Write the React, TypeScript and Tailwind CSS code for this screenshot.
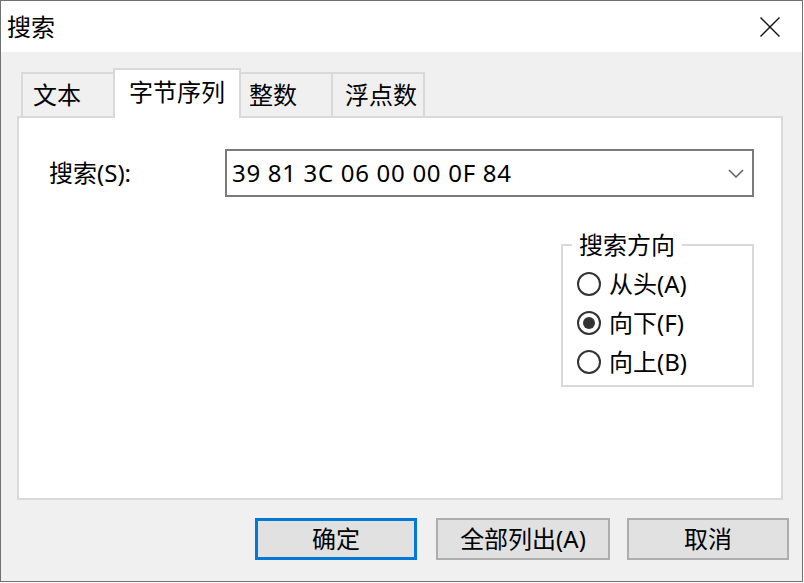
import React, { useState } from "react";

const options = ["从头(A)", "向下(F)", "向上(B)"];

const App = () => {
  const [dir, setDir] = useState(1);

  return (
    <div className="h-[583px] w-[804px] bg-white font-['Noto_Sans','Noto_Sans_CJK_SC',sans-serif] text-[24px] text-black">
      <div className="flex h-[582px] w-[803px] flex-col border border-[#707070] bg-[#f0f0f0]">
        {/* 标题栏 */}
        <div className="flex h-[51px] shrink-0 items-center justify-between bg-white pl-[6px] pr-[22px]">
          <span className="leading-none">搜索</span>
          <svg width="20" height="20" viewBox="0 0 20 20">
            <path d="M0.5 0.5 L19.5 19.5 M19.5 0.5 L0.5 19.5" stroke="#111" strokeWidth="1.4" fill="none" />
          </svg>
        </div>

        {/* 选项卡 */}
        <div className="ml-[20px] mt-[16px] flex h-[48px] items-end">
          <div className="flex h-[44px] w-[94px] items-center border-2 border-b-0 border-[#d9d9d9] pl-[10px] leading-none">
            文本
          </div>
          <div className="relative z-10 -mb-[2px] -ml-[2px] flex h-[50px] w-[128px] items-center border-2 border-b-0 border-[#d9d9d9] bg-white pb-[4px] pl-[14px] leading-none">
            字节序列
          </div>
          <div className="-ml-[2px] flex h-[44px] w-[94px] items-center border-2 border-b-0 border-[#d9d9d9] pl-[8px] leading-none">
            整数
          </div>
          <div className="-ml-[2px] flex h-[44px] w-[94px] items-center border-2 border-b-0 border-[#d9d9d9] pl-[12px] leading-none">
            浮点数
          </div>
        </div>

        {/* 面板 */}
        <div className="ml-[16px] h-[384px] w-[766px] border-2 border-[#d9d9d9] bg-white">
          <div className="mt-[31px] flex items-center">
            <div className="w-[206px] pl-[30px] leading-none">搜索(S):</div>
            <div className="flex h-[48px] w-[529px] items-center justify-between border-2 border-[#7a7a7a] bg-white pl-[5px] pr-[8px]">
              <span className="leading-none tracking-[0.7px]">39 81 3C 06 00 00 0F 84</span>
              <svg width="16" height="9" viewBox="0 0 16 9">
                <path d="M1 1 L8 8 L15 1" stroke="#606060" strokeWidth="1.5" fill="none" />
              </svg>
            </div>
          </div>

          {/* 搜索方向 */}
          <div className="relative ml-[542px] mt-[47px] h-[143px] w-[193px] border-2 border-[#d9d9d9] pl-[14px] pt-[18px]">
            <span className="absolute -top-[13px] left-[9px] bg-white px-[7px] leading-[24px]">搜索方向</span>
            {options.map((label, i) => (
              <button
                key={label}
                onClick={() => setDir(i)}
                className="flex h-[39px] items-center gap-[8px] leading-none"
              >
                <span className="flex h-[24px] w-[24px] items-center justify-center rounded-full border-2 border-[#333333] bg-white">
                  {dir === i && <span className="h-[12px] w-[12px] rounded-full bg-[#333333]" />}
                </span>
                {label}
              </button>
            ))}
          </div>
        </div>

        {/* 按钮 */}
        <div className="ml-[254px] mt-[18px] flex h-[42px] gap-[19px]">
          <button className="h-full w-[162px] border-[3px] border-[#0078d7] bg-[#e1e1e1] leading-none">确定</button>
          <button className="h-full w-[174px] border-2 border-[#adadad] bg-[#e1e1e1] leading-none">全部列出(A)</button>
          <button className="-ml-[2px] h-full w-[162px] border-2 border-[#adadad] bg-[#e1e1e1] leading-none">取消</button>
        </div>
      </div>
    </div>
  );
};

export default App;
